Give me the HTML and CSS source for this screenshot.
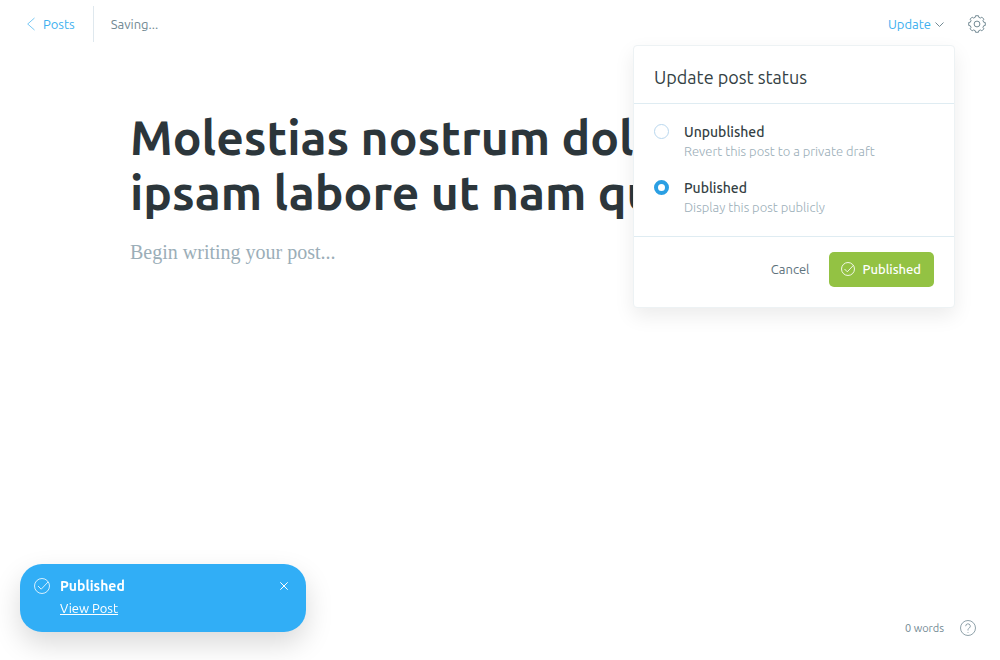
FILE: index.html
```html
<!DOCTYPE html>
<html lang="en">
<head>
<meta charset="utf-8">
<meta name="viewport" content="width=device-width, initial-scale=1">
<title>Post editor</title>
<link rel="stylesheet" href="styles.css">
</head>
<body>
<div class="editor">
  <header class="topbar">
    <nav class="topbar-left">
      <a class="back" href="#">
        <svg class="back-icon" viewBox="0 0 8 14" aria-hidden="true"><path d="M7.500 1 .7 7l6.800 6"/></svg>
        Posts
      </a>
      <span class="save-state">Saving...</span>
    </nav>
    <div class="topbar-right">
      <div class="publish">
        <button class="publish-trigger" type="button" aria-expanded="true">
          Update
          <svg class="chevron" viewBox="0 0 9 7" aria-hidden="true"><path d="M.5 1.500 4.500 5.500 8.500 1.500"/></svg>
        </button>
        <form class="publish-menu">
          <h2 class="publish-title">Update post status</h2>
          <div class="publish-options">
            <label class="option">
              <input class="option-radio" type="radio" name="status">
              <span class="option-text">
                <span class="option-name">Unpublished</span>
                <span class="option-note">Revert this post to a private draft</span>
              </span>
            </label>
            <label class="option">
              <input class="option-radio" type="radio" name="status" checked>
              <span class="option-text">
                <span class="option-name">Published</span>
                <span class="option-note">Display this post publicly</span>
              </span>
            </label>
          </div>
          <div class="publish-actions">
            <button class="cancel" type="button">Cancel</button>
            <button class="confirm" type="button">
              <svg class="confirm-icon" viewBox="0 0 16 16" aria-hidden="true"><circle cx="8" cy="8" r="7.400"/><path d="m4 8 3.200 3.200L14 4"/></svg>
              Published
            </button>
          </div>
        </form>
      </div>
      <button class="settings" type="button" aria-label="Settings">
        <svg class="settings-icon" viewBox="0 0 18 18" aria-hidden="true"><circle cx="9" cy="9" r="2.900"/><path d="M7.540.73h2.920l.33 1.610 1.660.68 1.370-.9 2.060 2.060-.9 1.370.68 1.660 1.610.33v2.920l-1.610.33-.68 1.660.9 1.370-2.060 2.060-1.370-.9-1.660.68-.33 1.610H7.540l-.33-1.610-1.660-.68-1.370.9-2.060-2.060.9-1.370-.68-1.660-1.610-.33V7.540l1.610-.33.68-1.660-.9-1.370 2.060-2.060 1.370.9 1.660-.68z"/></svg>
      </button>
    </div>
  </header>
  <main class="post">
    <textarea class="post-title" rows="2" aria-label="Post title" spellcheck="false">Molestias nostrum dolorem ipsam labore ut nam qui</textarea>
    <textarea class="post-body" aria-label="Post content" placeholder="Begin writing your post..."></textarea>
  </main>
  <footer class="statusbar">
    <span class="word-count">0 words</span>
    <a class="help" href="#" aria-label="Help">
      <svg class="help-icon" viewBox="0 0 16 16" aria-hidden="true"><circle cx="8" cy="8" r="7.500"/><path d="M5.700 6.200a2.300 2.300 0 1 1 3.500 1.900C8.300 8.700 8 9 8 10v.5M8 12v.8"/></svg>
    </a>
  </footer>
</div>
<aside class="toast" role="status">
  <svg class="toast-icon" viewBox="0 0 16 16" aria-hidden="true"><circle cx="8" cy="8" r="7.500"/><path d="m4 8 3.200 3.200L14 4"/></svg>
  <div class="toast-content">
    <strong class="toast-title">Published</strong>
    <a class="toast-link" href="#">View Post</a>
  </div>
  <button class="toast-close" type="button" aria-label="Close">
    <svg class="close-icon" viewBox="0 0 8 8" aria-hidden="true"><path d="m.3.3 7.400 7.400M7.700.3.3 7.700"/></svg>
  </button>
</aside>
</body>
</html>
```
FILE: styles.css
```css
*,
*::before,
*::after {
  box-sizing: border-box;
}

body {
  margin: 0;
  background: #fff;
  color: #343f44;
  font: 13px/20px Ubuntu, "Open Sans", "Noto Sans", sans-serif;
}

button {
  padding: 0;
  border: 0;
  background: none;
  color: inherit;
  font: inherit;
}

a {
  color: inherit;
  text-decoration: none;
}

svg {
  display: block;
  flex: none;
  fill: none;
  stroke: currentColor;
}

.editor {
  display: flex;
  flex-direction: column;
  min-height: 100vh;
}

.topbar {
  display: flex;
  align-items: center;
  justify-content: space-between;
  height: 48px;
  padding: 0 14px 0 27px;
}

.topbar-left,
.topbar-right {
  display: flex;
  align-items: center;
}

.back {
  display: flex;
  align-items: center;
  gap: 8px;
  height: 36px;
  padding-right: 18px;
  border-right: 1px solid #dfe8ee;
  color: #3eb0ef;
}

.back-icon {
  width: 8px;
  height: 14px;
  stroke-width: 0.7;
}

.save-state {
  padding-left: 17px;
  color: #738a94;
}

.topbar-right {
  gap: 24px;
}

.publish {
  position: relative;
}

.publish-trigger {
  display: flex;
  align-items: center;
  gap: 4px;
  color: #3eb0ef;
}

.chevron {
  width: 9px;
  height: 7px;
  color: #738a94;
}

.publish-menu {
  position: absolute;
  top: 31px;
  right: -11px;
  z-index: 1;
  width: 322px;
  border: 1px solid #edf2f4;
  border-radius: 4px;
  background: #fff;
  box-shadow: 0 8px 20px rgba(0, 0, 0, 0.08);
}

.publish-title {
  margin: 0;
  padding: 19px 20px 14px;
  border-bottom: 1px solid #dfecf2;
  font-size: 18px;
  font-weight: 400;
  line-height: 24px;
}

.publish-options {
  display: flex;
  flex-direction: column;
  gap: 18px;
  padding: 18px 20px 20px;
}

.option {
  display: flex;
  gap: 15px;
}

.option-radio {
  flex: none;
  appearance: none;
  width: 15px;
  height: 15px;
  margin: 2px 0 0;
  border: 1px solid #b9d7ee;
  border-radius: 50%;
  background: #fff;
}

.option-radio:checked {
  border: 4px solid #2b9fe3;
}

.option-text {
  display: flex;
  flex-direction: column;
}

.option-name {
  font-size: 14px;
  font-weight: 500;
}

.option-note {
  color: #9baeb8;
  font-weight: 300;
  line-height: 18px;
}

.publish-actions {
  display: flex;
  align-items: center;
  justify-content: flex-end;
  gap: 20px;
  padding: 15px 20px 20px;
  border-top: 1px solid #dfecf2;
}

.cancel,
.confirm {
  padding-top: 7px;
  padding-bottom: 8px;
}

.cancel {
  color: #5d727c;
}

.confirm {
  display: flex;
  align-items: center;
  gap: 7px;
  padding-right: 13px;
  padding-left: 12px;
  border-radius: 5px;
  background: #93c243;
  color: #fff;
  font-weight: 500;
}

.confirm-icon {
  width: 14px;
  height: 14px;
}

.settings {
  color: #738a94;
}

.settings-icon {
  width: 18px;
  height: 18px;
  stroke-linejoin: round;
}

.post {
  display: flex;
  flex: 1;
  flex-direction: column;
  width: 100%;
  max-width: 740px;
  margin: 0 auto;
  padding-top: 62px;
}

.post-title,
.post-body {
  display: block;
  width: 100%;
  padding: 0;
  border: 0;
  outline: 0;
  background: none;
  resize: none;
  overflow: hidden;
}

.post-title {
  color: #2c363b;
  font: 700 48px/55px Ubuntu, "Open Sans", "Noto Sans", sans-serif;
}

.post-body {
  flex: 1;
  margin-top: 16px;
  font: 20px/32px "Liberation Serif", serif;
}

.post-body::placeholder {
  color: #9baeb8;
}

.statusbar {
  display: flex;
  align-items: center;
  justify-content: flex-end;
  gap: 16px;
  padding: 22px 24px;
  color: #738a94;
  font-size: 11px;
}

.help-icon {
  width: 16px;
  height: 16px;
  stroke-width: 0.8;
}

.toast {
  position: fixed;
  bottom: 28px;
  left: 20px;
  display: flex;
  align-items: flex-start;
  gap: 10px;
  width: 286px;
  padding: 12px 18px 14px 14px;
  border-radius: 22px;
  background: #31aef6;
  box-shadow: 0 12px 28px rgba(0, 0, 0, 0.15);
  color: #fff;
}

.toast-icon {
  width: 16px;
  height: 16px;
  margin-top: 2px;
  stroke-width: 0.8;
}

.toast-content {
  display: flex;
  flex: 1;
  flex-direction: column;
  align-items: flex-start;
  gap: 2px;
}

.toast-title {
  font-size: 14px;
}

.toast-link {
  text-decoration: underline;
}

.toast-close {
  padding: 6px 0;
}

.close-icon {
  width: 8px;
  height: 8px;
}
```
